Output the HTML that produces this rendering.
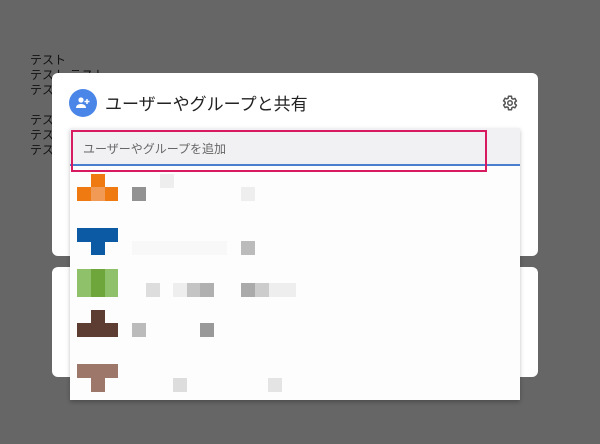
<!DOCTYPE html>
<html><head><meta charset="utf-8"><style>
body{margin:0;width:600px;height:444px;background:#666;position:relative;overflow:hidden;font-family:"Liberation Sans","Noto Sans CJK JP",sans-serif}
.a{position:absolute}
.t{position:absolute;left:30px;font-size:12px;color:#111;line-height:15px}
.p{position:absolute;width:14px;height:14px}
</style></head><body>
<div class="t" style="top:53px">テスト<br>テスト テスト<br>テスト<br><br>テスト<br>テスト<br>テスト</div>
<div class="a" style="left:52px;top:73px;width:486px;height:183px;background:#fff;border-radius:6px"></div>
<div class="a" style="left:52px;top:267px;width:486px;height:110px;background:#fff;border-radius:6px"></div>
<div class="a" style="left:69px;top:89px;width:28px;height:28px;border-radius:50%;background:#4a86e8"></div>
<svg class="a" style="left:75px;top:96px" width="16" height="14" viewBox="0 0 16 14"><circle cx="6" cy="4" r="2.6" fill="#fff"/><path d="M1 12c0-3 2.5-4 5-4s5 1 5 4z" fill="#fff"/><path d="M12 3v5M9.5 5.5h5" stroke="#fff" stroke-width="1.5"/></svg>
<div class="a" style="left:105px;top:90px;font-size:17px;color:#222">ユーザーやグループと共有</div>
<svg class="a" style="left:501px;top:94px" width="18" height="18" viewBox="0 0 24 24"><path fill="none" stroke="#555" stroke-width="2" stroke-linejoin="round" d="M19.4 13a7.5 7.5 0 0 0 0-2l2.1-1.6-2-3.5-2.5 1a7 7 0 0 0-1.7-1L15 3h-4l-.4 2.6a7 7 0 0 0-1.7 1l-2.5-1-2 3.5L6.6 11a7.5 7.5 0 0 0 0 2l-2.1 1.6 2 3.5 2.5-1a7 7 0 0 0 1.7 1L11 21h4l.4-2.6a7 7 0 0 0 1.7-1l2.5 1 2-3.5z" transform="translate(-1 0)"/><circle cx="12" cy="12" r="3" fill="none" stroke="#555" stroke-width="2"/></svg>
<div class="a" style="left:70px;top:128px;width:450px;height:272px;background:#fdfdfd;box-shadow:0 2px 4px rgba(0,0,0,.25)"></div>
<div class="a" style="left:70px;top:128px;width:450px;height:36px;background:#f1f1f3;border-bottom:2px solid #4a7fd0"></div>
<div class="a" style="left:71px;top:130px;width:412px;height:38px;border:2px solid #d81b60"></div>
<div class="a" style="left:83px;top:140px;font-size:12px;color:#666">ユーザーやグループを追加</div>
<div class="p" style="left:91px;top:174px;background:#ef7a12"></div>
<div class="a" style="left:77px;top:187px;width:41px;height:14px;background:#ef7a12"></div>
<div class="p" style="left:91px;top:187px;background:#f09a55"></div>
<div class="p" style="left:132px;top:187px;background:#929292"></div>
<div class="p" style="left:160px;top:174px;background:#eee"></div>
<div class="p" style="left:241px;top:187px;background:#eee"></div>
<div class="a" style="left:77px;top:228px;width:41px;height:14px;background:#0c5aa4"></div>
<div class="p" style="left:91px;top:241px;background:#0c5aa4"></div>
<div class="p" style="left:241px;top:241px;background:#bbb"></div>
<div class="a" style="left:132px;top:241px;width:95px;height:14px;background:#f8f8f8"></div>
<div class="a" style="left:77px;top:269px;width:41px;height:28px;background:#8fc06a"></div>
<div class="a" style="left:91px;top:269px;width:14px;height:28px;background:#6fa63c"></div>
<div class="p" style="left:146px;top:283px;background:#ddd"></div>
<div class="p" style="left:173px;top:283px;background:#eee"></div>
<div class="a" style="left:187px;top:283px;width:27px;height:14px;background:#c4c4c4"></div>
<div class="p" style="left:200px;top:283px;background:#b0b0b0"></div>
<div class="p" style="left:241px;top:283px;background:#aaa"></div>
<div class="p" style="left:255px;top:283px;background:#ccc"></div>
<div class="a" style="left:269px;top:283px;width:27px;height:14px;background:#eee"></div>
<div class="p" style="left:91px;top:310px;background:#5d3d32"></div>
<div class="a" style="left:77px;top:323px;width:41px;height:14px;background:#5d3d32"></div>
<div class="p" style="left:132px;top:323px;background:#bbb"></div>
<div class="p" style="left:200px;top:323px;background:#999"></div>
<div class="a" style="left:77px;top:364px;width:41px;height:14px;background:#9c776a"></div>
<div class="p" style="left:91px;top:378px;background:#9c776a"></div>
<div class="p" style="left:173px;top:378px;background:#ddd"></div>
<div class="p" style="left:268px;top:378px;background:#e4e4e4"></div>
</body></html>
